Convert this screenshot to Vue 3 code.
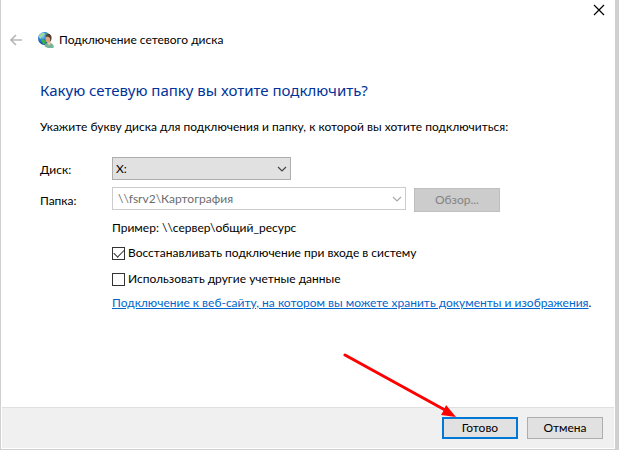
<script setup>
import { ref } from "vue";

const drives = ["Z:", "Y:", "X:", "W:", "V:"];
const drive = ref("X:");
const folder = ref("\\\\fsrv2\\Картография");
const reconnect = ref(true);
const otherAccount = ref(false);
</script>

<template>
  <div class="desktop">
    <main class="dialog">
      <div class="caption">
        <button type="button" class="icon-button" aria-label="Закрыть">
          <svg width="12" height="12" viewBox="0 0 12 12">
            <path d="M1 1L11 11M11 1L1 11" stroke="#000" stroke-width="1.2" />
          </svg>
        </button>
      </div>

      <header class="title-bar">
        <button type="button" class="icon-button" aria-label="Назад" disabled>
          <svg width="12" height="12" viewBox="0 0 12 12" fill="none">
            <path d="M12 6H1M6 1L1 6L6 11" stroke="#b8b8b8" stroke-width="1.7" />
          </svg>
        </button>
        <svg class="logo" width="16" height="16" viewBox="0 0 16 16">
          <defs>
            <radialGradient id="globe" cx="35%" cy="30%" r="75%">
              <stop offset="0" stop-color="#8fd5f7" />
              <stop offset="0.45" stop-color="#2279d3" />
              <stop offset="1" stop-color="#0b3591" />
            </radialGradient>
          </defs>
          <circle cx="6.500" cy="6.500" r="6.500" fill="url(#globe)" />
          <path d="M1 5C1 3 3 1 5.500 .7L7.500 1.500L6 3L4.500 4L3.500 6L2 7Z" fill="#9bdc9c" />
          <path d="M3 8L5.500 7L8 9.500L7 12.500L5 12L4 10Z" fill="#36b34a" />
          <path d="M8 1L11 2L12 4L9 4Z" fill="#47ad54" />
          <path d="M6.500 14.500C6.500 12 8 11 10 10.500L13 11C15.500 12 16 14 15.500 16H10Z" fill="#76b599" />
          <path d="M9 10L12.500 10L12.500 12.500L10.500 13Z" fill="#e9c7a5" />
          <ellipse cx="10" cy="7" rx="2.500" ry="3.500" fill="#d9a57f" />
          <path d="M7.500 5C8 2.500 10 1.500 12 2.500C14 3.500 14 7 12.500 10L12 6L10 4.500Z" fill="#573a2c" />
        </svg>
        <span>Подключение сетевого диска</span>
      </header>

      <form id="map-drive" class="content" @submit.prevent>
        <h1>Какую сетевую папку вы хотите подключить?</h1>
        <p class="hint">
          Укажите букву диска для подключения и папку, к которой вы хотите подключиться:
        </p>

        <div class="fields">
          <label for="drive">Диск:</label>
          <div class="combo drive">
            <select id="drive" v-model="drive">
              <option v-for="item in drives" :key="item">{{ item }}</option>
            </select>
            <svg width="10" height="6" viewBox="0 0 10 6" fill="none">
              <path d="M1 1L5 5L9 1" stroke="#444" stroke-width="1.2" />
            </svg>
          </div>

          <label for="folder">Папка:</label>
          <div class="folder-row">
            <div class="combo folder">
              <input id="folder" v-model="folder" type="text" disabled />
              <svg width="10" height="6" viewBox="0 0 10 6" fill="none">
                <path d="M1 1L5 5L9 1" stroke="#aaa" stroke-width="1.2" />
              </svg>
            </div>
            <button type="button" class="button browse" disabled>Обзор...</button>
          </div>
        </div>

        <div class="options">
          <p>Пример: \\сервер\общий_ресурс</p>
          <label class="check">
            <input v-model="reconnect" type="checkbox" />
            Восстанавливать подключение при входе в систему
          </label>
          <label class="check">
            <input v-model="otherAccount" type="checkbox" />
            Использовать другие учетные данные
          </label>
          <p class="site">
            <a href="#">Подключение к веб-сайту, на котором вы можете хранить документы и изображения</a>.
          </p>
        </div>
      </form>

      <footer class="footer">
        <button type="submit" form="map-drive" class="button primary">Готово</button>
        <button type="button" class="button">Отмена</button>
        <svg class="pointer" width="114" height="66" viewBox="0 0 114 66">
          <path d="M2 2L102 57" stroke="#f00" stroke-width="3" stroke-linecap="round" />
          <path d="M113 64L98 62L101 57L103 52Z" fill="#f00" />
        </svg>
      </footer>
    </main>
  </div>
</template>

<style>
body {
  margin: 0;
}
</style>

<style scoped>
* {
  box-sizing: border-box;
}

.desktop {
  display: flex;
  min-height: 100vh;
  padding: 0 4px 1px 1px;
  background: #d0d0d0;
  color: #000;
  font-family: Lato, "Open Sans", sans-serif;
  font-size: 12px;
  line-height: 16px;
}

.dialog {
  flex: 1;
  min-width: 0;
  display: flex;
  flex-direction: column;
  padding: 0 1px 1px;
  background: #fff;
}

button,
input,
select {
  font: inherit;
}

h1,
p {
  margin: 0;
}

.icon-button {
  display: flex;
  padding: 0;
  border: none;
  background: none;
}

.caption {
  display: flex;
  justify-content: flex-end;
  padding: 4px 9px 0;
}

.title-bar {
  display: flex;
  align-items: center;
  margin-top: 16px;
  padding: 0 8px;
}

.logo {
  margin: 0 5px 0 16px;
}

.content {
  flex: 1;
  padding: 0 16px 16px 38px;
}

h1 {
  margin-top: 30px;
  color: #003399;
  font-family: "Noto Sans", "Open Sans", sans-serif;
  font-size: 15px;
  font-weight: 400;
  line-height: 24px;
}

.hint {
  margin-top: 17px;
}

.fields {
  display: grid;
  grid-template-columns: 72px 1fr;
  align-items: center;
  row-gap: 7px;
  margin-top: 22px;
}

.fields label {
  padding-top: 2px;
}

.combo {
  position: relative;
}

.combo svg {
  position: absolute;
  top: 9px;
  right: 4px;
  pointer-events: none;
}

.combo select,
.combo input {
  display: block;
  width: 100%;
  height: 23px;
  margin: 0;
  border: 1px solid #adadad;
  border-radius: 0;
  appearance: none;
}

.combo select {
  padding: 0 20px 0 3px;
  background: #e1e1e1;
  color: #000;
}

.combo input {
  padding: 0 20px 0 5px;
  border-color: #ccc;
  background: #fff;
  color: #6d6d6d;
}

.drive {
  width: 179px;
}

.folder {
  width: 294px;
}

.folder-row {
  display: flex;
  gap: 8px;
}

.button {
  width: 76px;
  height: 22px;
  padding: 0;
  border: 1px solid #adadad;
  border-radius: 0;
  background: #e1e1e1;
  color: #000;
}

.browse {
  width: 86px;
  height: 24px;
  margin-top: 1px;
  border-color: #bfbfbf;
  background: #ccc;
  color: #838383;
}

.options {
  margin: 8px 0 0 72px;
}

.check {
  display: flex;
  align-items: center;
  gap: 3px;
  margin-top: 9px;
}

.check + .check {
  margin-top: 10px;
}

.check input {
  flex: none;
  width: 13px;
  height: 13px;
  margin: 0;
  border: 1px solid #333;
  background: #fff;
  appearance: none;
}

.check input:checked::before {
  content: "";
  display: block;
  width: 9px;
  height: 5px;
  margin: 1px;
  border: solid #333;
  border-width: 0 0 1px 1px;
  transform: rotate(-45deg);
}

.site {
  margin-top: 8px;
}

.site a {
  color: #0066cc;
}

.footer {
  position: relative;
  display: flex;
  justify-content: flex-end;
  gap: 9px;
  padding: 9px 11px;
  border-top: 1px solid #dfdfdf;
  background: #f0f0f0;
}

.primary {
  border: 2px solid #0078d7;
}

.pointer {
  position: absolute;
  right: 157px;
  bottom: 29px;
  pointer-events: none;
}
</style>
